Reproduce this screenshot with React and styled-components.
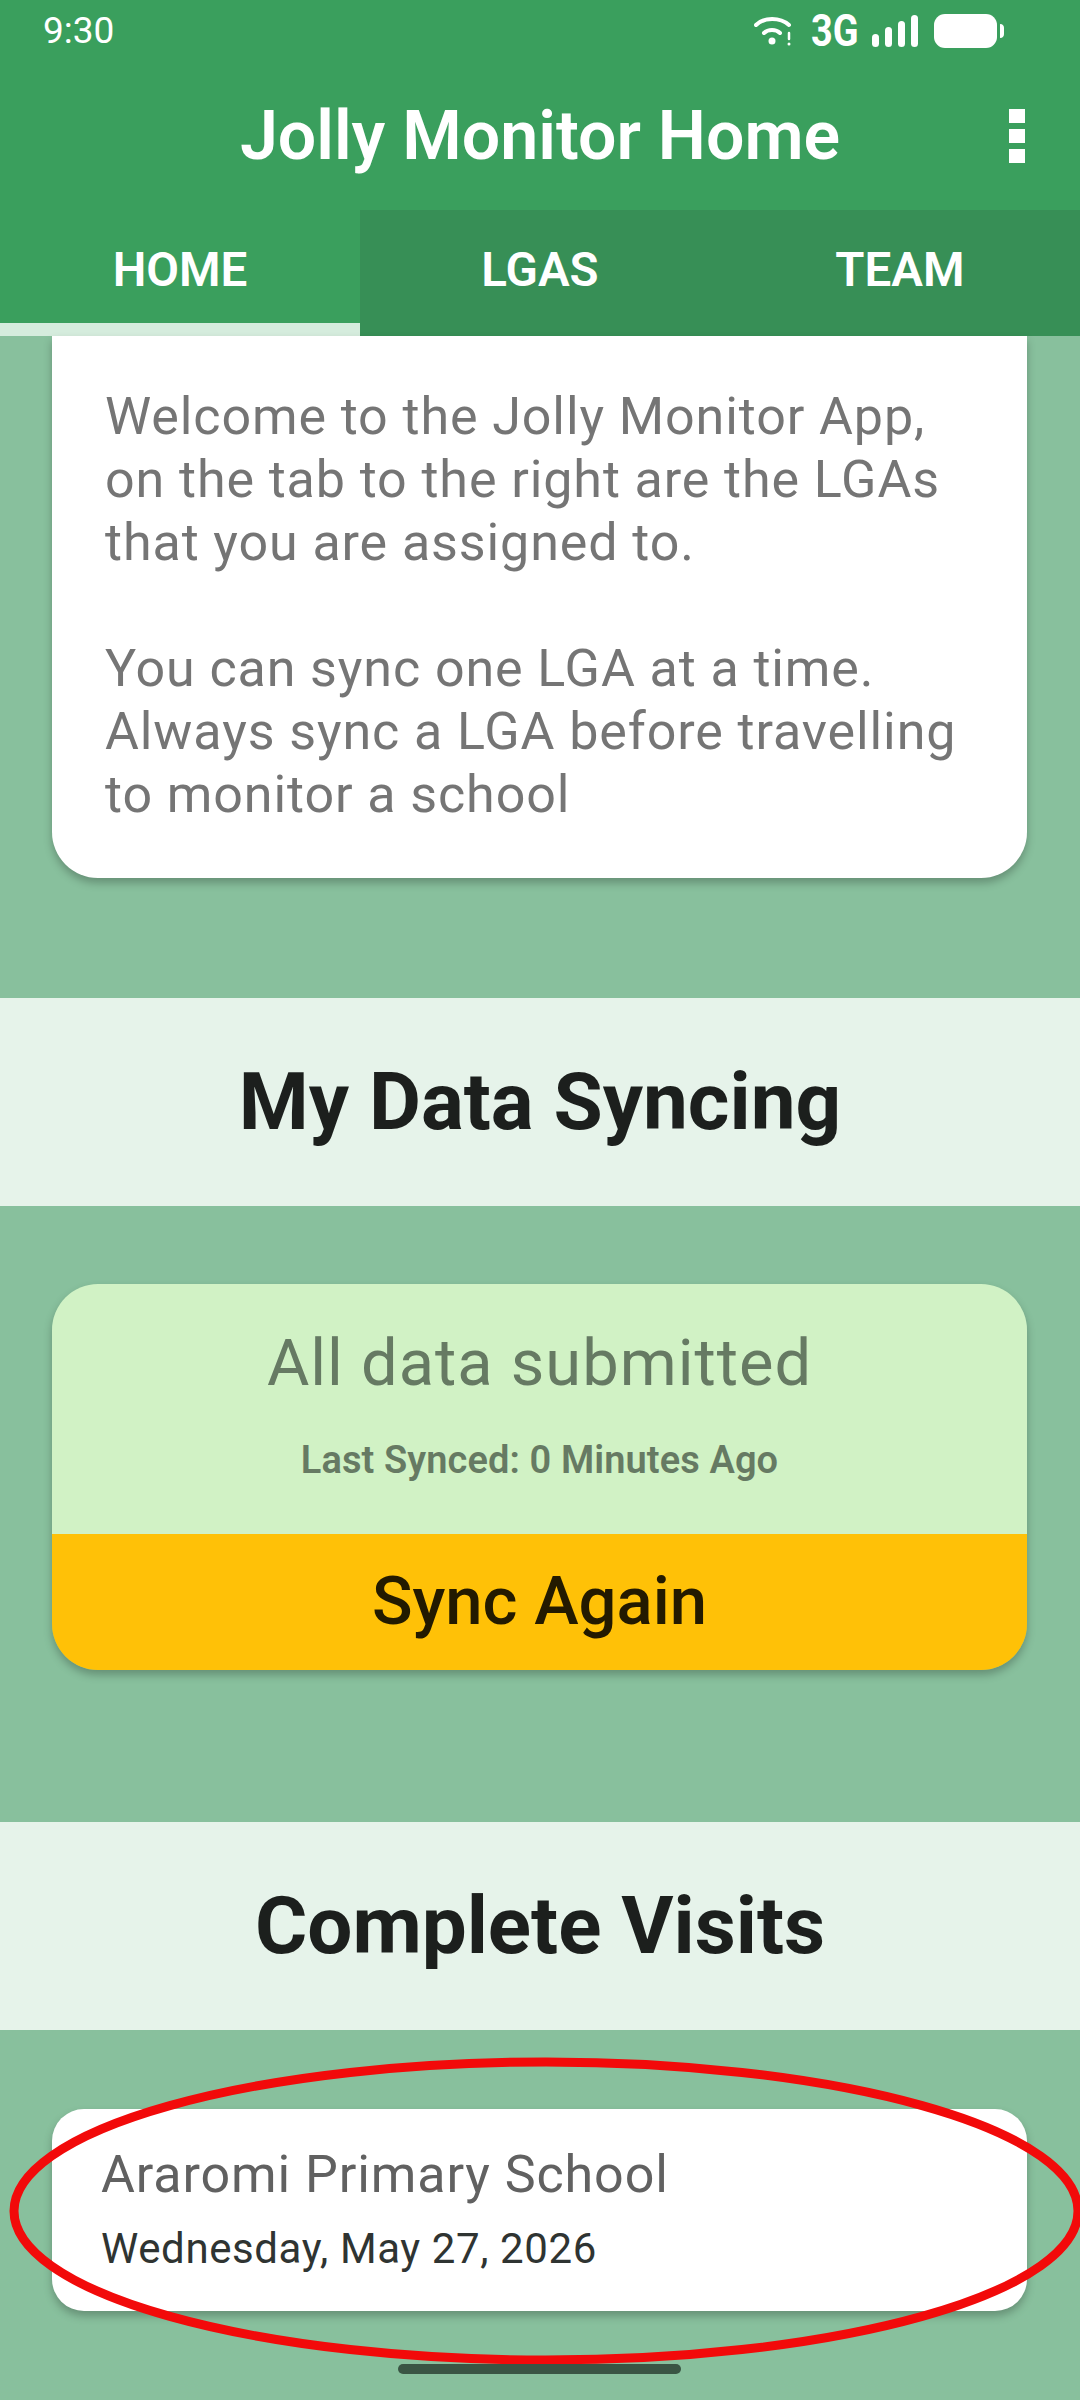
import React from 'react'
import styled, { createGlobalStyle } from 'styled-components'

const GlobalStyle = createGlobalStyle`
  html, body {
    margin: 0;
    padding: 0;
    background: #88c09d;
  }
  * {
    box-sizing: border-box;
  }
`

const Screen = styled.div`
  position: relative;
  width: 1080px;
  height: 2400px;
  overflow: hidden;
  background: #88c09d;
  font-family: Roboto, "Liberation Sans", sans-serif;
`

const Header = styled.div`
  background: #3a9f5d;
  height: 336px;
  display: flex;
  flex-direction: column;
`

const StatusBar = styled.div`
  height: 62px;
  display: flex;
  align-items: center;
  justify-content: space-between;
  padding: 0 75px 0 43px;
  color: #fff;
`

const Clock = styled.span`
  font-size: 37px;
  line-height: 62px;
`

const StatusIcons = styled.div`
  display: flex;
  align-items: center;
  gap: 16px;
  height: 62px;
`

const NetworkGroup = styled.div`
  display: flex;
  align-items: center;
`

const NetworkLabel = styled.span`
  font-size: 44px;
  font-weight: 700;
  line-height: 62px;
  margin: 0 15px 0 19px;
  transform: scaleX(0.86);
  transform-origin: left center;
  width: 46px;
`

const TitleBar = styled.div`
  position: relative;
  height: 148px;
  display: flex;
  align-items: center;
  justify-content: center;
  color: #fff;
`

const Title = styled.h1`
  margin: 0;
  font-size: 68px;
  font-weight: 600;
  line-height: 148px;
`

const MenuButton = styled.div`
  position: absolute;
  right: 55px;
  top: 47px;
  display: flex;
  flex-direction: column;
  gap: 6px;
`

const MenuDot = styled.span`
  display: block;
  width: 16px;
  height: 14px;
  background: #fff;
`

const Tabs = styled.div`
  flex: 1;
  display: flex;
`

const Tab = styled.div`
  flex: 1;
  display: flex;
  align-items: center;
  justify-content: center;
  padding-bottom: 6px;
  background: ${(props) => (props.$active ? '#3a9f5d' : '#378f56')};
  box-shadow: ${(props) => (props.$active ? 'inset 0 -13px 0 #d5ecdd' : 'none')};
  color: #fff;
  font-size: 47.5px;
  font-weight: 600;
`

const Body = styled.div`
  display: flex;
  flex-direction: column;
`

const IntroCard = styled.div`
  margin: 0 53px 0 52px;
  height: 542px;
  padding: 49px 53px 0;
  background: #fff;
  border-radius: 0 0 46px 46px;
  box-shadow: 0 5px 8px rgba(0, 0, 0, 0.25);
  color: #757575;
  font-size: 52px;
  line-height: 63px;
  letter-spacing: 0.9px;
`

const IntroLine = styled.div`
  min-height: 63px;
`

const SectionBand = styled.div`
  margin-top: ${(props) => props.$top}px;
  height: 208px;
  display: flex;
  align-items: center;
  justify-content: center;
  background: #e6f3ea;
  color: #1c1f1d;
  font-size: 80px;
  font-weight: 700;
`

const SyncCard = styled.div`
  margin: 78px 53px 0 52px;
  height: 386px;
  display: flex;
  flex-direction: column;
  border-radius: 46px;
  overflow: hidden;
  box-shadow: 0 5px 8px rgba(0, 0, 0, 0.25);
`

const SyncStatus = styled.div`
  height: 250px;
  display: flex;
  flex-direction: column;
  align-items: center;
  background: #d1f2c5;
  color: #667a63;
`

const SyncHeading = styled.div`
  margin-top: 42px;
  font-size: 65px;
  line-height: 74px;
  letter-spacing: 1px;
`

const SyncedAgo = styled.div`
  margin-top: 38px;
  font-size: 38px;
  font-weight: 600;
  line-height: 44px;
  letter-spacing: 0.1px;
`

const SyncButton = styled.div`
  flex: 1;
  display: flex;
  align-items: center;
  justify-content: center;
  padding-bottom: 2px;
  background: #ffc107;
  color: #231a00;
  font-size: 67px;
  font-weight: 500;
`

const VisitCard = styled.div`
  margin: 79px 53px 0 52px;
  height: 202px;
  padding: 35px 49px 0;
  background: #fff;
  border-radius: 32px;
  box-shadow: 0 5px 8px rgba(0, 0, 0, 0.25);
`

const VisitName = styled.div`
  color: #616161;
  font-size: 52px;
  line-height: 62px;
  letter-spacing: 0.9px;
`

const VisitDate = styled.div`
  margin-top: 18px;
  color: #2f3432;
  font-size: 42px;
  line-height: 50px;
  letter-spacing: 0.6px;
`

const Annotation = styled.svg`
  position: absolute;
  left: 0;
  top: 2040px;
`

const HomeIndicator = styled.div`
  position: absolute;
  left: 398px;
  top: 2364px;
  width: 283px;
  height: 10px;
  border-radius: 5px;
  background: #3a5544;
`

const WifiIcon = () => (
  <svg width="38" height="30" viewBox="0 0 38 30" fill="none" stroke="#fff" strokeLinecap="round">
    <path d="M2 9 C10 1 26 1 35 9" strokeWidth="4" />
    <path d="M10 17 C14 13 22 13 26 17" strokeWidth="4" />
    <circle cx="18" cy="25" r="3.5" fill="#fff" stroke="none" />
    <path d="M35 17 V23" strokeWidth="2.5" />
    <circle cx="35" cy="28" r="1.5" fill="#fff" stroke="none" />
  </svg>
)

const SignalIcon = () => (
  <svg width="46" height="32" viewBox="0 0 46 32" fill="#fff">
    <rect x="0" y="19" width="7" height="13" rx="3.5" />
    <rect x="13" y="12" width="7" height="20" rx="3.5" />
    <rect x="26" y="6" width="7" height="26" rx="3.5" />
    <rect x="39" y="0" width="7" height="32" rx="3.5" />
  </svg>
)

const BatteryIcon = () => (
  <svg width="71" height="34" viewBox="0 0 71 34" fill="#fff">
    <rect x="0" y="0" width="63" height="34" rx="11" />
    <path d="M66 10 C69 10 70 12 70 14 V20 C70 22 69 24 66 24 Z" />
  </svg>
)

const App = () => (
  <Screen>
    <GlobalStyle />
    <Header>
      <StatusBar>
        <Clock>9:30</Clock>
        <StatusIcons>
          <NetworkGroup>
            <WifiIcon />
            <NetworkLabel>3G</NetworkLabel>
            <SignalIcon />
          </NetworkGroup>
          <BatteryIcon />
        </StatusIcons>
      </StatusBar>
      <TitleBar>
        <Title>Jolly Monitor Home</Title>
        <MenuButton>
          <MenuDot />
          <MenuDot />
          <MenuDot />
        </MenuButton>
      </TitleBar>
      <Tabs>
        <Tab $active>HOME</Tab>
        <Tab>LGAS</Tab>
        <Tab>TEAM</Tab>
      </Tabs>
    </Header>
    <Body>
      <IntroCard>
        <IntroLine>Welcome to the Jolly Monitor App,</IntroLine>
        <IntroLine>on the tab to the right are the LGAs</IntroLine>
        <IntroLine>that you are assigned to.</IntroLine>
        <IntroLine />
        <IntroLine>You can sync one LGA at a time.</IntroLine>
        <IntroLine>Always sync a LGA before travelling</IntroLine>
        <IntroLine>to monitor a school</IntroLine>
      </IntroCard>
      <SectionBand $top={120}>My Data Syncing</SectionBand>
      <SyncCard>
        <SyncStatus>
          <SyncHeading>All data submitted</SyncHeading>
          <SyncedAgo>Last Synced: 0 Minutes Ago</SyncedAgo>
        </SyncStatus>
        <SyncButton>Sync Again</SyncButton>
      </SyncCard>
      <SectionBand $top={152}>Complete Visits</SectionBand>
      <VisitCard>
        <VisitName>Araromi Primary School</VisitName>
        <VisitDate>Wednesday, May 27, 2026</VisitDate>
      </VisitCard>
    </Body>
    <Annotation width="1080" height="340" viewBox="0 2040 1080 340" fill="none">
      <ellipse cx="546" cy="2211" rx="532" ry="149" stroke="#f20a0a" strokeWidth="9" />
    </Annotation>
    <HomeIndicator />
  </Screen>
)

export default App
